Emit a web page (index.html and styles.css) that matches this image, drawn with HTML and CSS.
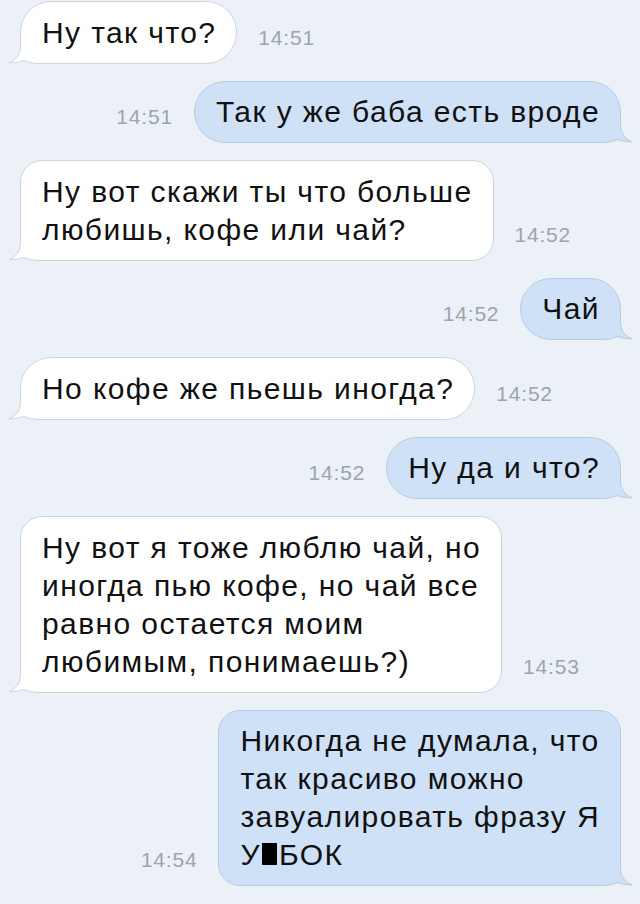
FILE: index.html
```html
<!DOCTYPE html>
<html lang="ru">
<head>
    <meta charset="UTF-8">
    <meta name="viewport" content="width=device-width, initial-scale=1.0">
    <title>Диалог</title>
    <link rel="stylesheet" href="styles.css">
</head>
<body>
<div class="chat">

    <div class="row in">
        <div class="bubble pill">Ну так что?
            <svg class="tail" width="30" height="32" viewBox="0 0 30 32"><rect class="patch" x="0" y="18" width="30" height="14"/><path class="fill" d="M12.5,0 V14 Q12.5,26 1,31 Q10,31 16,28.5 Q21,31.5 30,31.5 V0 Z"/><path class="edge" d="M12.5,0 V14 Q12.5,26 1,31 Q10,31 16,28.5 Q21,31.5 30,31.5"/></svg>
        </div>
        <span class="time">14:51</span>
    </div>

    <div class="row out">
        <span class="time">14:51</span>
        <div class="bubble pill">Так у же баба есть вроде
            <svg class="tail" width="30" height="32" viewBox="0 0 30 32"><rect class="patch" x="0" y="18" width="30" height="14"/><path class="fill" d="M17.5,0 V14 Q17.5,26 29,31 Q20,31 14,28.5 Q9,31.5 0,31.5 V0 Z"/><path class="edge" d="M17.5,0 V14 Q17.5,26 29,31 Q20,31 14,28.5 Q9,31.5 0,31.5"/></svg>
        </div>
    </div>

    <div class="row in">
        <div class="bubble">Ну вот скажи ты что больше<br>любишь, кофе или чай?
            <svg class="tail" width="30" height="32" viewBox="0 0 30 32"><rect class="patch" x="0" y="18" width="30" height="14"/><path class="fill" d="M12.5,0 V14 Q12.5,26 1,31 Q10,31 16,28.5 Q21,31.5 30,31.5 V0 Z"/><path class="edge" d="M12.5,0 V14 Q12.5,26 1,31 Q10,31 16,28.5 Q21,31.5 30,31.5"/></svg>
        </div>
        <span class="time">14:52</span>
    </div>

    <div class="row out">
        <span class="time">14:52</span>
        <div class="bubble pill">Чай
            <svg class="tail" width="30" height="32" viewBox="0 0 30 32"><rect class="patch" x="0" y="18" width="30" height="14"/><path class="fill" d="M17.5,0 V14 Q17.5,26 29,31 Q20,31 14,28.5 Q9,31.5 0,31.5 V0 Z"/><path class="edge" d="M17.5,0 V14 Q17.5,26 29,31 Q20,31 14,28.5 Q9,31.5 0,31.5"/></svg>
        </div>
    </div>

    <div class="row in">
        <div class="bubble pill">Но кофе же пьешь иногда?
            <svg class="tail" width="30" height="32" viewBox="0 0 30 32"><rect class="patch" x="0" y="18" width="30" height="14"/><path class="fill" d="M12.5,0 V14 Q12.5,26 1,31 Q10,31 16,28.5 Q21,31.5 30,31.5 V0 Z"/><path class="edge" d="M12.5,0 V14 Q12.5,26 1,31 Q10,31 16,28.5 Q21,31.5 30,31.5"/></svg>
        </div>
        <span class="time">14:52</span>
    </div>

    <div class="row out">
        <span class="time">14:52</span>
        <div class="bubble pill">Ну да и что?
            <svg class="tail" width="30" height="32" viewBox="0 0 30 32"><rect class="patch" x="0" y="18" width="30" height="14"/><path class="fill" d="M17.5,0 V14 Q17.5,26 29,31 Q20,31 14,28.5 Q9,31.5 0,31.5 V0 Z"/><path class="edge" d="M17.5,0 V14 Q17.5,26 29,31 Q20,31 14,28.5 Q9,31.5 0,31.5"/></svg>
        </div>
    </div>

    <div class="row in">
        <div class="bubble">Ну вот я тоже люблю чай, но<br>иногда пью кофе, но чай все<br>равно остается моим<br>любимым, понимаешь?)
            <svg class="tail" width="30" height="32" viewBox="0 0 30 32"><rect class="patch" x="0" y="18" width="30" height="14"/><path class="fill" d="M12.5,0 V14 Q12.5,26 1,31 Q10,31 16,28.5 Q21,31.5 30,31.5 V0 Z"/><path class="edge" d="M12.5,0 V14 Q12.5,26 1,31 Q10,31 16,28.5 Q21,31.5 30,31.5"/></svg>
        </div>
        <span class="time">14:53</span>
    </div>

    <div class="row out">
        <span class="time">14:54</span>
        <div class="bubble">Никогда не думала, что<br>так красиво можно<br>завуалировать фразу Я<br>У<span class="censor"></span>БОК
            <svg class="tail" width="30" height="32" viewBox="0 0 30 32"><rect class="patch" x="0" y="18" width="30" height="14"/><path class="fill" d="M17.5,0 V14 Q17.5,26 29,31 Q20,31 14,28.5 Q9,31.5 0,31.5 V0 Z"/><path class="edge" d="M17.5,0 V14 Q17.5,26 29,31 Q20,31 14,28.5 Q9,31.5 0,31.5"/></svg>
        </div>
    </div>

</div>
</body>
</html>
```

FILE: styles.css
```css
body {
    margin: 0;
    background: #ecf1f8;
    font-family: "Liberation Sans", Arial, sans-serif;
    color: #111;
}
.chat {
    display: flex;
    flex-direction: column;
    gap: 17px;
    padding: 1px 19px 0 20px;
}
.row {
    display: flex;
    align-items: flex-end;
    gap: 21px;
}
.row.out {
    justify-content: flex-end;
}
.bubble {
    position: relative;
    font-size: 30px;
    line-height: 38px;
    letter-spacing: 1.4px;
    padding: 11.5px 20px 11px 21px;
    border: 1px solid #cdd5de;
    border-radius: 22px;
    background: #fff;
}
.bubble.pill {
    border-radius: 31px;
}
.in .bubble {
    border-bottom-left-radius: 0;
}
.out .bubble {
    background: #cfe1f7;
    border-color: #b7cbe3;
    border-bottom-right-radius: 0;
}
.time {
    font-size: 21px;
    line-height: 25px;
    letter-spacing: 0.8px;
    color: #9ca4ae;
    margin-bottom: 14px;
}
.tail {
    position: absolute;
    bottom: -1px;
    display: block;
}
.in .tail {
    left: -13px;
}
.out .tail {
    right: -13px;
}
.tail .patch {
    fill: #ecf1f8;
}
.tail .fill {
    fill: #fff;
}
.tail .edge {
    fill: none;
    stroke: #cdd5de;
    stroke-width: 1;
}
.out .tail .fill {
    fill: #cfe1f7;
}
.out .tail .edge {
    stroke: #b7cbe3;
}
.censor {
    display: inline-block;
    width: 15px;
    height: 22px;
    margin: 0 2px 0 1px;
    background: #000;
    vertical-align: baseline;
}
```
